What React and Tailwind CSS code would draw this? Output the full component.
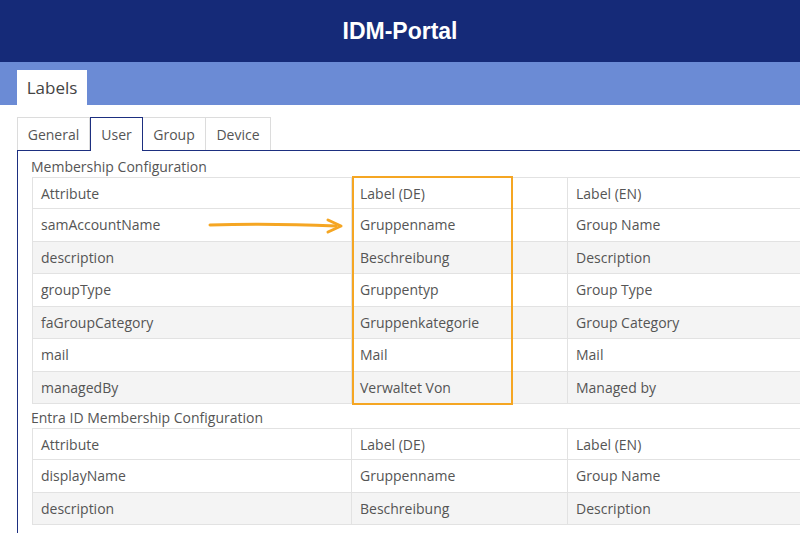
import React from 'react';

const rows1 = [
    ['samAccountName', 'Gruppenname', 'Group Name'],
    ['description', 'Beschreibung', 'Description'],
    ['groupType', 'Gruppentyp', 'Group Type'],
    ['faGroupCategory', 'Gruppenkategorie', 'Group Category'],
    ['mail', 'Mail', 'Mail'],
    ['managedBy', 'Verwaltet Von', 'Managed by'],
];
const rows2 = [
    ['displayName', 'Gruppenname', 'Group Name'],
    ['description', 'Beschreibung', 'Description'],
];

const Row = ({ cells, shade, h = 'h-[32.5px]' }) => (
    <div className={`flex ${h} border-b border-[#e2e2e2] ${shade ? 'bg-[#f4f4f4]' : 'bg-white'}`}>
        <div className="w-[319px] pl-[8px] flex items-center border-r border-[#e2e2e2]">{cells[0]}</div>
        <div className="w-[216px] pl-[8px] flex items-center border-r border-[#e2e2e2]">{cells[1]}</div>
        <div className="flex-1 pl-[8px] flex items-center">{cells[2]}</div>
    </div>
);

const Table = ({ rows, highlight }) => (
    <div className="relative ml-[14px] border-t border-l border-[#e2e2e2]">
        <Row cells={['Attribute', 'Label (DE)', 'Label (EN)']} h="h-[31px]" />
        {rows.map((r, i) => <Row key={i} cells={r} shade={i % 2 === 1} />)}
        {highlight && (
            <>
                <div className="absolute left-[319px] top-[-2px] w-[161px] h-[229px] border-2 border-[#f5a623]" />
                <svg className="absolute left-[175px] top-[40px]" width="140" height="16" viewBox="0 0 140 16">
                    <path d="M2 7 Q60 5 128 8" stroke="#f5a623" strokeWidth="3" fill="none" strokeLinecap="round" />
                    <path d="M120 2 L133 8 L120 14" stroke="#f5a623" strokeWidth="3" fill="none" strokeLinecap="round" strokeLinejoin="round" />
                </svg>
            </>
        )}
    </div>
);

export default function App() {
    return (
        <div className="w-[800px] h-[533px] overflow-hidden bg-white text-[14px] text-[#555]" style={{ fontFamily: '"Open Sans", "Noto Sans", sans-serif' }}>
            <header className="h-[62px] bg-[#152a78] flex items-center justify-center">
                <span className="text-white text-[23px] font-bold" style={{ fontFamily: '"Liberation Sans", Arial, sans-serif' }}>IDM-Portal</span>
            </header>
            <div className="h-[43px] bg-[#6b8bd5] flex items-end pl-[17px]">
                <div className="h-[35px] w-[70px] bg-white flex items-center justify-center text-[17px] text-[#444]">Labels</div>
            </div>
            <div className="pt-[12px] pl-[17px]">
                <div className="flex h-[33px]">
                    <div className="w-[73px] border border-[#dcdcdc] border-b-0 flex items-center justify-center">General</div>
                    <div className="w-[53px] border border-[#1d2f80] border-b-0 bg-white flex items-center justify-center relative z-10 h-[34px]">User</div>
                    <div className="w-[63px] border border-[#dcdcdc] border-b-0 border-l-0 flex items-center justify-center">Group</div>
                    <div className="w-[65px] border border-[#dcdcdc] border-b-0 border-l-0 flex items-center justify-center">Device</div>
                </div>
                <div className="border-l border-t border-[#1d2f80] h-[400px]">
                    <div className="pl-[13px] h-[26px] flex items-end">Membership Configuration</div>
                    <Table rows={rows1} highlight />
                    <div className="pl-[13px] h-[24px] flex items-end">Entra ID Membership Configuration</div>
                    <Table rows={rows2} />
                </div>
            </div>
        </div>
    );
}
